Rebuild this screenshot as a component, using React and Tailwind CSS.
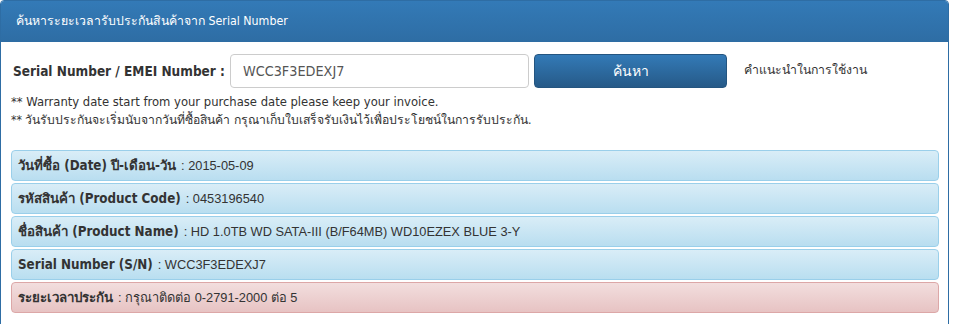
const rows = [
    { label: "วันที่ซื้อ (Date) ปี-เดือน-วัน", value: "2015-05-09", tone: "info" },
    { label: "รหัสสินค้า (Product Code)", value: "0453196540", tone: "info" },
    {
        label: "ชื่อสินค้า (Product Name)",
        value: "HD 1.0TB WD SATA-III (B/F64MB) WD10EZEX BLUE 3-Y",
        tone: "info",
    },
    { label: "Serial Number (S/N)", value: "WCC3F3EDEXJ7", tone: "info" },
    { label: "ระยะเวลาประกัน", value: "กรุณาติดต่อ 0-2791-2000 ต่อ 5", tone: "danger" },
];

const App = () => {
    return (
        <div className="w-[956px] h-[324px] overflow-hidden bg-white font-['DejaVu_Sans_Condensed','DejaVu_Sans',sans-serif] font-stretch-condensed text-[#333]">
            <div className="w-[949px] h-[340px] border border-[#2e6da4] rounded-t-[4px] overflow-hidden">
                {/* heading */}
                <div className="h-[41px] flex items-center px-[15px] bg-gradient-to-b from-[#337ab7] to-[#2e6da4] text-white text-[12.3px]">
                    ค้นหาระยะเวลารับประกันสินค้าจาก Serial Number
                </div>

                <div className="pl-[10px] pr-[10px]">
                    {/* search form */}
                    <div className="flex items-center mt-[12px] h-[34px]">
                        <label className="pl-[2px] w-[219px] text-[13.5px] font-bold">
                            Serial Number / EMEI Number :
                        </label>
                        <input
                            readOnly
                            value="WCC3F3EDEXJ7"
                            className="w-[299px] h-[34px] px-[12px] border border-[#ccc] rounded-[4px] text-[14.3px] text-[#555] outline-none"
                        />
                        <button className="ml-[5px] w-[193px] h-[34px] rounded-[4px] border border-[#245580] bg-gradient-to-b from-[#337ab7] to-[#265a88] text-white text-[14px]">
                            ค้นหา
                        </button>
                        <span className="ml-[17px] -mt-[2px] text-[12.3px]">
                            คำแนะนำในการใช้งาน
                        </span>
                    </div>

                    {/* notes */}
                    <div className="mt-[4px] leading-[19px]">
                        <p className="text-[12.9px]">** Warranty date start from your purchase date please keep your invoice.</p>
                        <p className="text-[12.2px]">** วันรับประกันจะเริ่มนับจากวันที่ซื้อสินค้า กรุณาเก็บใบเสร็จรับเงินไว้เพื่อประโยชน์ในการรับประกัน.</p>
                    </div>

                    {/* result rows */}
                    <div className="mt-[20px] w-[928px] flex flex-col gap-[2px]">
                        {rows.map((r) => (
                            <div
                                key={r.label}
                                className={
                                    r.tone === "danger"
                                        ? "h-[31px] flex items-center px-[6px] rounded-[4px] border border-[#dca7a7] bg-gradient-to-b from-[#f2dede] to-[#e7c3c3]"
                                        : "h-[31px] flex items-center px-[6px] rounded-[4px] border border-[#9acfea] bg-gradient-to-b from-[#d9edf7] to-[#b9def0]"
                                }
                            >
                                <span className="text-[13.3px] font-bold">{r.label}</span>
                                <span className="ml-[5px] text-[12.8px] font-['Liberation_Sans',sans-serif] font-stretch-normal">
                                    : {r.value}
                                </span>
                            </div>
                        ))}
                    </div>
                </div>
            </div>
        </div>
    );
};

export default App;
